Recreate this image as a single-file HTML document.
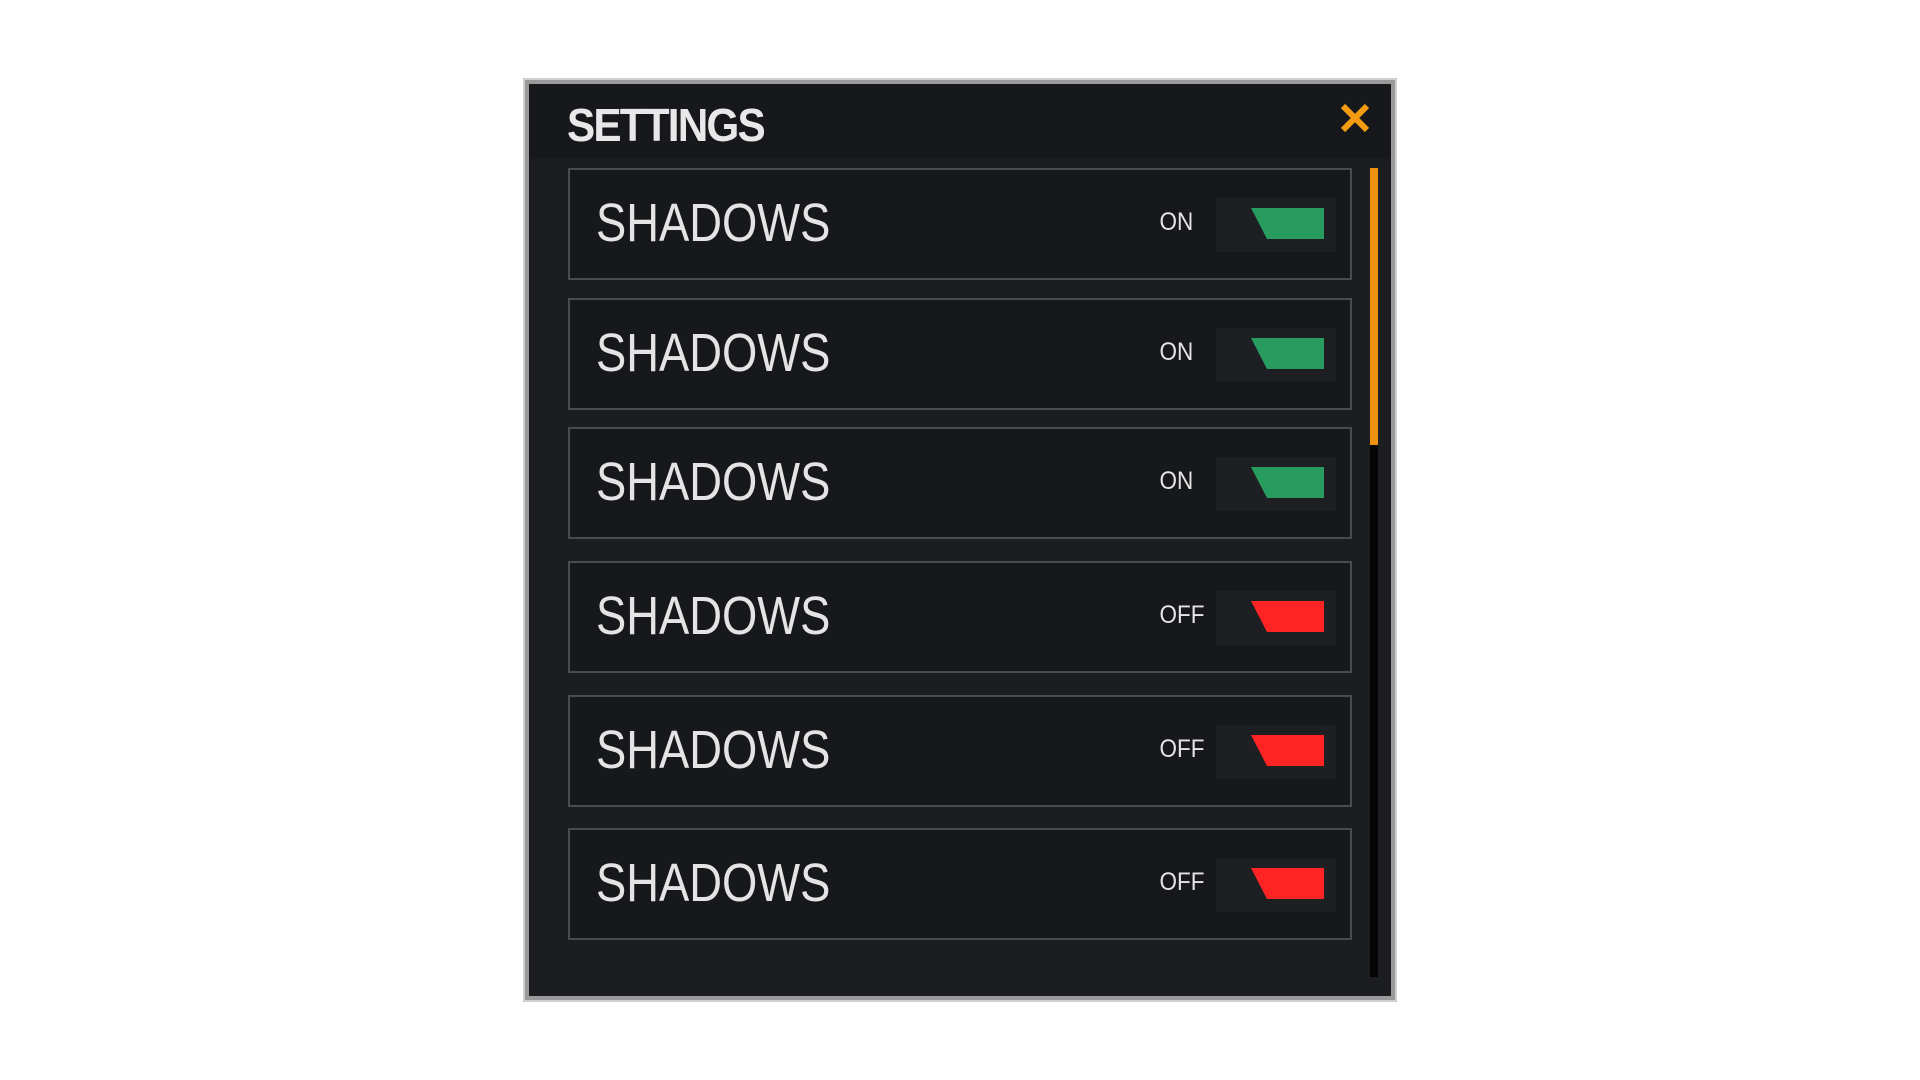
<!DOCTYPE html>
<html><head><style>
body{margin:0;width:1920px;height:1080px;background:#fff;position:relative;overflow:hidden;font-family:"Liberation Sans",sans-serif}
.panel{position:absolute;left:525px;top:80px;width:870px;height:920px;background:#1c1d21;border:4px solid #9a9a9a;box-sizing:border-box;outline:2px solid #d0d0d0}
.hdr{position:absolute;left:0;top:0;width:100%;height:75px;background:#17181b}
.title{position:absolute;left:38px;top:14px;color:#e8e8e8;font:bold 46px "Liberation Sans",sans-serif;letter-spacing:-2px;transform:scaleX(0.92);transform-origin:left}
.x{position:absolute;left:810px;top:18px}
.row{position:absolute;left:568px;width:784px;height:112px;background:#17181b;border:2px solid #4a4b4f;box-sizing:border-box}
.lbl{position:absolute;left:26px;top:22px;color:#e4e4e4;font-size:54px;transform:scaleX(0.84);transform-origin:left}
.st{position:absolute;left:588px;top:38px;color:#e4e4e4;font-size:25px;width:30px;text-align:center;transform:scaleX(.9)}
.tg{position:absolute;left:646px;top:28px;width:120px;height:54px;background:#1e1f23}
.tg svg{position:absolute;left:35px;top:10px}
.sb{position:absolute;left:1370px;top:168px;width:8px;height:809px;background:#050505}
.th{position:absolute;left:0;top:0;width:8px;height:277px;background:#f0900f}
</style></head><body>
<div class="panel"><div class="hdr"></div><div class="title">SETTINGS</div>
<svg class="x" width="32" height="32" viewBox="0 0 32 32"><path d="M4 4L28 28M28 4L4 28" stroke="#f39c12" stroke-width="6"/></svg></div>
<div class="row" style="top:168px"><div class="lbl">SHADOWS</div><div class="st">ON</div><div class="tg"><svg width="74" height="32"><path d="M0 0H73V31H16Z" fill="#279c5e"/></svg></div></div>
<div class="row" style="top:298px"><div class="lbl">SHADOWS</div><div class="st">ON</div><div class="tg"><svg width="74" height="32"><path d="M0 0H73V31H16Z" fill="#279c5e"/></svg></div></div>
<div class="row" style="top:427px"><div class="lbl">SHADOWS</div><div class="st">ON</div><div class="tg"><svg width="74" height="32"><path d="M0 0H73V31H16Z" fill="#279c5e"/></svg></div></div>
<div class="row" style="top:561px"><div class="lbl">SHADOWS</div><div class="st">OFF</div><div class="tg"><svg width="74" height="32"><path d="M0 0H73V31H16Z" fill="#ff2424"/></svg></div></div>
<div class="row" style="top:695px"><div class="lbl">SHADOWS</div><div class="st">OFF</div><div class="tg"><svg width="74" height="32"><path d="M0 0H73V31H16Z" fill="#ff2424"/></svg></div></div>
<div class="row" style="top:828px"><div class="lbl">SHADOWS</div><div class="st">OFF</div><div class="tg"><svg width="74" height="32"><path d="M0 0H73V31H16Z" fill="#ff2424"/></svg></div></div>
<div class="sb"><div class="th"></div></div>
</body></html>
